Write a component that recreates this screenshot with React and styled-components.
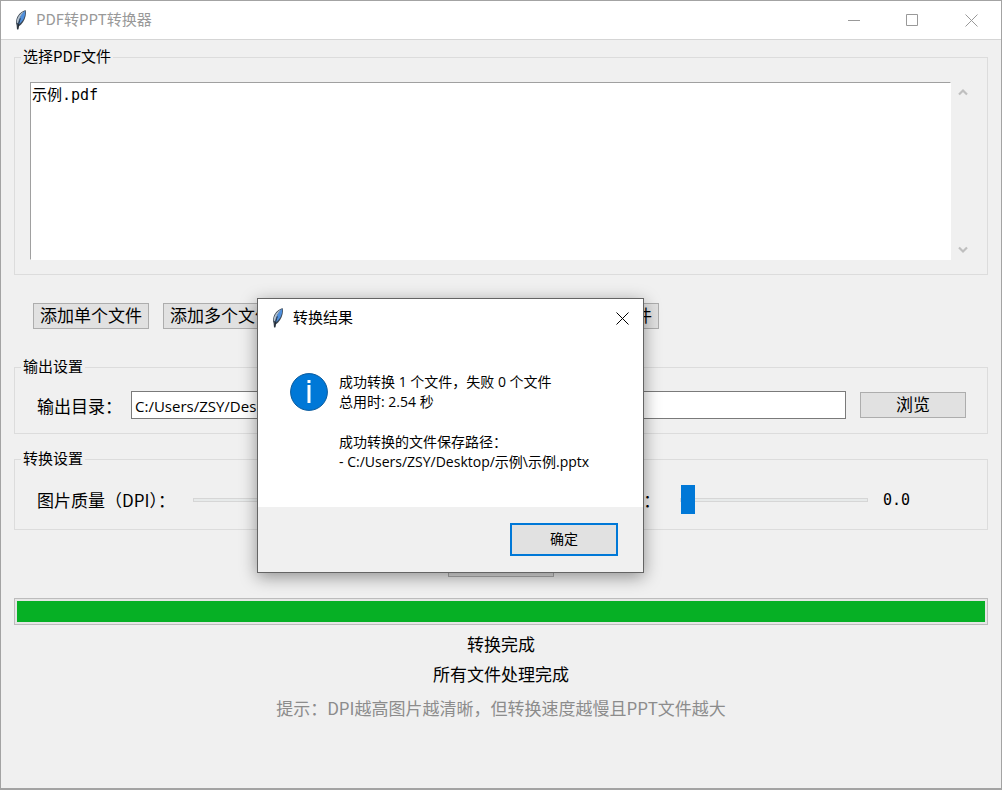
import React, { useState } from 'react'
import styled, { createGlobalStyle } from 'styled-components'

const files = ['示例.pdf']

function Feather() {
  return (
    <FeatherSvg viewBox="0 0 16 22" aria-hidden="true">
      <path d="M12.8 1.200C9 1.800 5.400 5 3.700 9.400C2.900 11.600 2.700 14 3.600 16.200L4 20.400H5.400L5.800 17.400C9.200 15.200 11.600 11.400 12.600 7C13 5 13.100 3 12.800 1.200Z" fill="#3a4653" />
      <path d="M12.200 1.800C9.200 3.400 6.800 7 5 15.800C9.200 13.400 12.600 8.600 12.200 1.800Z" fill="#4f8fdc" />
      <path d="M11 2.400C7 4 3.900 8.600 3.600 13.600L5 14.200C6 9.600 8 5.400 11 2.400Z" fill="#b4c2cf" />
      <path d="M7.400 9.400C6.200 12.600 5.400 15.600 4.800 19.800" fill="none" stroke="#15191e" strokeWidth="0.800" />
    </FeatherSvg>
  )
}

function InfoIcon() {
  return (
    <InfoSvg viewBox="0 0 38 38" aria-hidden="true">
      <circle cx="19" cy="19" r="18.400" fill="#0078d7" stroke="#0a5a9c" strokeWidth="1" />
      <rect x="17.500" y="7" width="3" height="3" fill="#fff" />
      <rect x="17.500" y="12" width="3" height="18" fill="#fff" />
    </InfoSvg>
  )
}

function CloseIcon() {
  return (
    <svg width="13" height="13" viewBox="0 0 13 13" aria-hidden="true">
      <path d="M0.500 0.500L12.500 12.500M12.500 0.500L0.500 12.500" stroke="currentColor" fill="none" />
    </svg>
  )
}

function Arrow({ down }) {
  return (
    <svg width="10" height="8" viewBox="0 0 10 8" aria-hidden="true">
      <path d={down ? 'M1 1.500L5 5.500L9 1.500' : 'M1 6.500L5 2.500L9 6.500'} stroke="#bfbfbf" strokeWidth="2.200" fill="none" />
    </svg>
  )
}

function ResultDialog({ onClose }) {
  return (
    <Dialog role="dialog" aria-labelledby="result-title">
      <DialogBar>
        <Feather />
        <DialogTitle id="result-title">转换结果</DialogTitle>
        <CaptionButton $dark aria-label="关闭" onClick={onClose}><CloseIcon /></CaptionButton>
      </DialogBar>
      <DialogBody>
        <InfoIcon />
        <Message>
          <p>成功转换 1 个文件，失败 0 个文件</p>
          <p>总用时: 2.54 秒</p>
          <br />
          <p>成功转换的文件保存路径：</p>
          <p>- C:/Users/ZSY/Desktop/示例\示例.pptx</p>
        </Message>
      </DialogBody>
      <DialogFooter>
        <OkButton onClick={onClose}>确定</OkButton>
      </DialogFooter>
    </Dialog>
  )
}

function App() {
  const [open, setOpen] = useState(true)
  const [dir, setDir] = useState('C:/Users/ZSY/Desktop/示例')
  const [dpi, setDpi] = useState(300)
  const [margin, setMargin] = useState(0)

  return (
    <>
      <GlobalStyle />
      <Window>
        <TitleBar>
          <Feather />
          <Title>PDF转PPT转换器</Title>
          <CaptionButton aria-label="最小化">
            <svg width="13" height="13" viewBox="0 0 13 13"><path d="M1 6.500H13" stroke="currentColor" /></svg>
          </CaptionButton>
          <CaptionButton aria-label="最大化">
            <svg width="13" height="13" viewBox="0 0 13 13"><path d="M0.500 0.500H11.500V11.500H0.500Z" stroke="currentColor" fill="none" /></svg>
          </CaptionButton>
          <CaptionButton aria-label="关闭"><CloseIcon /></CaptionButton>
        </TitleBar>

        <Content>
          <Group>
            <legend>选择PDF文件</legend>
            <ListRow>
              <FileList size={9} aria-label="PDF文件列表">
                {files.map((name) => <option key={name}>{name}</option>)}
              </FileList>
              <ScrollBar>
                <ScrollButton aria-label="向上滚动"><Arrow /></ScrollButton>
                <ScrollButton aria-label="向下滚动"><Arrow down /></ScrollButton>
              </ScrollBar>
            </ListRow>
          </Group>

          <ButtonRow>
            <Button>添加单个文件</Button>
            <Button>添加多个文件</Button>
            <Button>添加文件夹</Button>
            <Button>移除选中文件</Button>
            <Button>清空所有文件</Button>
          </ButtonRow>

          <Group>
            <legend>输出设置</legend>
            <OutputRow>
              <label htmlFor="dir">输出目录：</label>
              <PathInput id="dir" value={dir} onChange={(e) => setDir(e.target.value)} />
              <Button>浏览</Button>
            </OutputRow>
          </Group>

          <Group>
            <legend>转换设置</legend>
            <ScaleRow>
              <label htmlFor="dpi">图片质量（DPI）：</label>
              <Scale id="dpi" type="range" min="72" max="600" value={dpi} onChange={(e) => setDpi(Number(e.target.value))} />
              <ScaleValue>{dpi}</ScaleValue>
              <MarginLabel htmlFor="margin">页面边距（英寸）：</MarginLabel>
              <Scale id="margin" type="range" min="0" max="2" step="0.1" value={margin} onChange={(e) => setMargin(Number(e.target.value))} />
              <ScaleValue>{margin.toFixed(1)}</ScaleValue>
            </ScaleRow>
          </Group>

          <StartButton>开始转换</StartButton>

          <Progress role="progressbar" aria-valuenow={100} aria-label="转换进度">
            <ProgressFill style={{ width: '100%' }} />
          </Progress>
          <Status>转换完成</Status>
          <Status>所有文件处理完成</Status>
          <Tip>提示：DPI越高图片越清晰，但转换速度越慢且PPT文件越大</Tip>
        </Content>

        {open && <ResultDialog onClose={() => setOpen(false)} />}
      </Window>
    </>
  )
}

export default App

const uiFont = '"Noto Sans CJK SC", sans-serif'
const pathFont = '"Open Sans", "Noto Sans CJK SC", sans-serif'
const monoFont = '"DejaVu Sans Mono", "Noto Sans CJK SC", monospace'

const GlobalStyle = createGlobalStyle`
  * {
    box-sizing: border-box;
  }
  body {
    margin: 0;
    background: #f0f0f0;
    color: #000;
    font-family: ${uiFont};
    font-size: 17px;
  }
  button, input, select {
    font: inherit;
    color: inherit;
    border-radius: 0;
  }
`

const Window = styled.main`
  position: relative;
  min-height: 100vh;
  background: #f0f0f0;
  border: 1px solid #a3a3a3;
  border-bottom-width: 2px;
`

const TitleBar = styled.header`
  display: flex;
  align-items: center;
  height: 39px;
  padding-left: 12px;
  background: #fff;
  border-bottom: 1px solid #d5d5d5;
`

const Title = styled.h1`
  flex: 1;
  margin: 0 0 0 7px;
  padding-bottom: 2px;
  font-size: 15px;
  font-weight: 400;
  line-height: 20px;
  color: #999;
`

const CaptionButton = styled.button`
  display: flex;
  align-items: center;
  justify-content: center;
  width: ${({ $dark }) => ($dark ? '42px' : '59px')};
  height: 38px;
  padding: 0;
  border: 0;
  background: none;
  color: ${({ $dark }) => ($dark ? '#000' : '#999')};
`

const FeatherSvg = styled.svg`
  width: 16px;
  height: 22px;
  flex: none;
`

const Content = styled.div`
  display: flex;
  flex-direction: column;
  padding: 6px 13px;
`

const Group = styled.fieldset`
  min-width: 0;
  margin: 0 0 14px;
  padding: 0;
  border: 1px solid #dcdcdc;
  legend {
    margin-left: 6px;
    padding: 0 2px 2px;
    font-size: 15px;
    line-height: 20px;
  }
`

const ListRow = styled.div`
  display: flex;
  margin: 14px 14px 14px 15px;
  height: 178px;
`

const FileList = styled.select`
  flex: 1;
  padding: 0;
  border: 1px solid;
  border-color: #a0a0a0 #fff #fff #a0a0a0;
  background: #fff;
  font-family: ${monoFont};
  font-size: 15px;
  outline: none;
  overflow: hidden;
  option {
    height: 18px;
    min-height: 18px;
    padding: 0 1px;
    line-height: 18px;
  }
`

const ScrollBar = styled.div`
  display: flex;
  flex-direction: column;
  justify-content: space-between;
  width: 21px;
  margin-left: 1px;
`

const ScrollButton = styled.button`
  display: flex;
  align-items: center;
  justify-content: center;
  height: 20px;
  padding: 0;
  border: 0;
  background: none;
`

const Button = styled.button`
  min-width: 106px;
  height: 26px;
  padding: 0 6px 2px;
  border: 1px solid #adadad;
  background: #e1e1e1;
  line-height: 22px;
  white-space: nowrap;
`

const ButtonRow = styled.div`
  display: flex;
  gap: 14px;
  padding: 14px 19px 27px;
`

const OutputRow = styled.div`
  display: flex;
  align-items: center;
  padding: 13px 21px 14px 22px;
  ${Button} {
    margin-left: 14px;
  }
`

const PathInput = styled.input`
  flex: 1;
  min-width: 0;
  height: 28px;
  margin-left: 9px;
  padding: 0 3px;
  border: 1px solid #7a7a7a;
  background: #fff;
  font-family: ${pathFont};
  font-size: 15px;
`

const ScaleRow = styled.div`
  display: flex;
  align-items: center;
  padding: 15px 0 15px 22px;
  label {
    white-space: nowrap;
  }
`

const MarginLabel = styled.label`
  margin: 0 2px 0 16px;
`

const Scale = styled.input`
  appearance: none;
  flex: 1;
  min-width: 0;
  height: 29px;
  margin: 0 0 0 18px;
  background: none;
  &::-webkit-slider-runnable-track {
    height: 4px;
    border: 1px solid #d6d6d6;
    background: #e7eaea;
  }
  &::-webkit-slider-thumb {
    appearance: none;
    width: 14px;
    height: 29px;
    margin-top: -14px;
    background: #0078d7;
  }
`

const ScaleValue = styled.output`
  flex: none;
  width: 119px;
  padding-left: 15px;
  font-family: ${monoFont};
  font-size: 15px;
`

const StartButton = styled(Button)`
  align-self: center;
  margin: 7px 0 21px;
`

const Progress = styled.div`
  height: 27px;
  padding: 2px;
  border: 1px solid #bcbcbc;
  background: #e6e6e6;
`

const ProgressFill = styled.div`
  height: 100%;
  background: #06b025;
`

const Status = styled.p`
  margin: 0;
  line-height: 30px;
  text-align: center;
  ${Progress} + & {
    margin-top: 4px;
  }
`

const Tip = styled(Status)`
  margin-top: 4px;
  color: #8c8c8c;
`

/* floating message box */
const Dialog = styled.section`
  position: absolute;
  top: 297px;
  left: 256px;
  width: 387px;
  border: 1px solid #646464;
  background: #fff;
  box-shadow: 0 4px 16px rgba(0, 0, 0, 0.4);
`

const DialogBar = styled.header`
  display: flex;
  align-items: center;
  height: 38px;
  padding-left: 12px;
`

const DialogTitle = styled.h2`
  flex: 1;
  margin: 0 0 0 7px;
  padding-bottom: 2px;
  font-size: 15px;
  font-weight: 400;
  line-height: 20px;
`

const DialogBody = styled.div`
  display: flex;
  align-items: flex-start;
  gap: 11px;
  padding: 35px 32px;
`

const InfoSvg = styled.svg`
  width: 38px;
  height: 38px;
  margin-top: 1px;
  flex: none;
`

const Message = styled.div`
  font-family: ${pathFont};
  font-size: 14px;
  line-height: 20px;
  white-space: nowrap;
  p {
    margin: 0;
  }
`

const DialogFooter = styled.footer`
  display: flex;
  justify-content: flex-end;
  padding: 16px 25px;
  background: #f0f0f0;
`

const OkButton = styled.button`
  width: 108px;
  height: 33px;
  padding: 0 0 3px;
  border: 2px solid #0078d7;
  background: #e1e1e1;
  font-size: 14px;
`
